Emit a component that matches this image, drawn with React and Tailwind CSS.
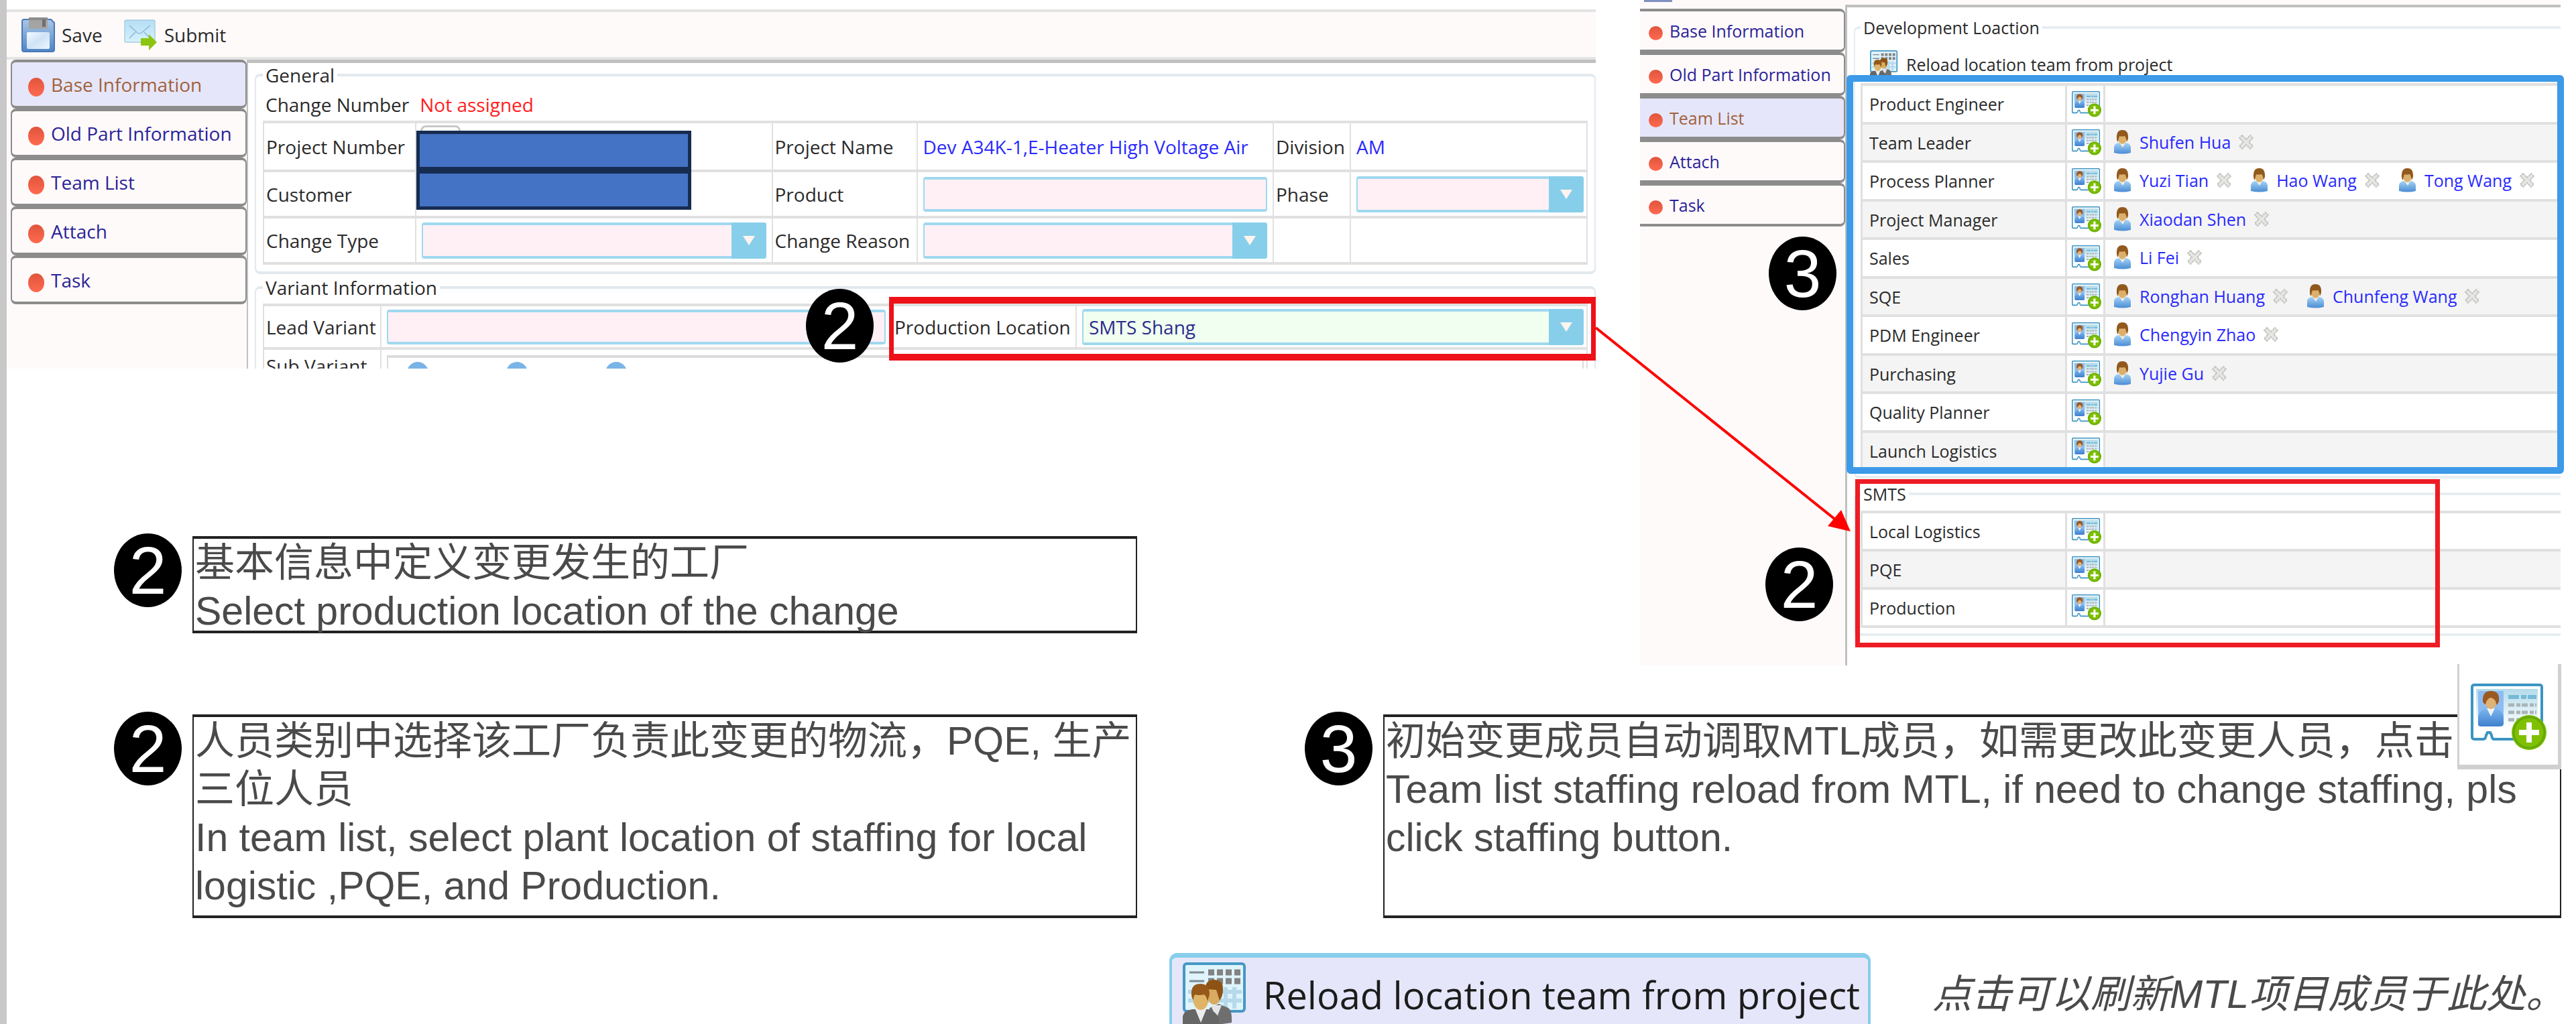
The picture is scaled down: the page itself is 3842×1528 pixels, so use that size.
import { useId } from "react";

function FloppyIcon() {
  return (
    <svg viewBox="0 0 50 52" className="h-[52px] w-[50px]" aria-hidden="true">
      <defs>
        <linearGradient id="floppyBody" x1="0" y1="0" x2="0" y2="1">
          <stop offset="0" stopColor="#a9c6e6" />
          <stop offset="1" stopColor="#4f86c6" />
        </linearGradient>
        <linearGradient id="floppyLabel" x1="0" y1="0" x2="1" y2="1">
          <stop offset="0" stopColor="#f4faff" />
          <stop offset="0.5" stopColor="#cfe3f6" />
          <stop offset="1" stopColor="#eef6ff" />
        </linearGradient>
      </defs>
      <path d="M4 3h40l5 5v40a3 3 0 0 1-3 3H4a3 3 0 0 1-3-3V6a3 3 0 0 1 3-3z" fill="url(#floppyBody)" stroke="#4c78b4" strokeWidth="2" />
      <path d="M11 0h28v15a2 2 0 0 1-2 2H13a2 2 0 0 1-2-2z" fill="#a4a4a4" />
      <path d="M11 0h28v4H11z" fill="#8c8c8c" />
      <rect x="31" y="3" width="5" height="11" fill="#6e6e6e" />
      <rect x="8" y="22" width="34" height="25" rx="2" fill="url(#floppyLabel)" />
    </svg>
  );
}

function MailIcon() {
  return (
    <svg viewBox="0 0 50 46" className="h-[46px] w-[50px]" aria-hidden="true">
      <defs>
        <linearGradient id="mailBody" x1="0" y1="0" x2="0" y2="1">
          <stop offset="0" stopColor="#b5def5" />
          <stop offset="1" stopColor="#d6f1fd" />
        </linearGradient>
      </defs>
      <rect x="1" y="1" width="45" height="33" rx="2" fill="url(#mailBody)" stroke="#a9cde0" strokeWidth="1.5" />
      <path d="M8 9l12 11q3 2 6 0L39 9M8 28l9-9M39 28l-9-9" fill="none" stroke="#8db9d2" strokeWidth="1.5" />
      <path d="M25 28h12v-6l12 12-12 12v-7H25z" fill="#8cc510" />
    </svg>
  );
}

function CardIcon({ className }) {
  const id = useId();
  return (
    <svg viewBox="0 0 113 100" className={className} aria-hidden="true">
      <defs>
        <linearGradient id={id + "c"} x1="0" y1="0" x2="0" y2="1">
          <stop offset="0" stopColor="#b4dbea" />
          <stop offset="0.9" stopColor="#ffffff" />
        </linearGradient>
        <linearGradient id={id + "s"} x1="0" y1="0" x2="0" y2="1">
          <stop offset="0" stopColor="#7db7f0" />
          <stop offset="1" stopColor="#3f7fcd" />
        </linearGradient>
      </defs>
      <path d="M5 2h98a3 3 0 0 1 3 3v74a4 4 0 0 1-4 4H34q-2 0-3-6l-2-4h-4l-2 4q-1 6-4 6H5a3 3 0 0 1-3-3V5a3 3 0 0 1 3-3z" fill="#fff" stroke="#3b94c2" strokeWidth="4" />
      <rect x="8" y="8" width="92" height="62" fill={`url(#${id}c)`} />
      <rect x="11" y="11" width="38" height="40" fill="#8cbcf2" />
      <path d="M11 62V50q2-11 12-13h14q10 2 12 13v10q0 4-6 4H17q-5 0-6-2z" fill={`url(#${id}s)`} />
      <path d="M24 37h12l-6 12z" fill="#f2f4f6" />
      <ellipse cx="30" cy="25" rx="9" ry="13" fill="#dfb276" />
      <path d="M18 27q-1-16 12-16 14 0 12 16-2 4-4 5 0-9-8-11-6 1-8 10-3-1-4-4z" fill="#9a5a22" />
      <path d="M56 20h42" stroke="#76bad8" strokeWidth="6" strokeDasharray="16 3 8 2" />
      <path d="M56 32h42M56 43h42M56 54h20" stroke="#a9b4b9" strokeWidth="5" strokeDasharray="9 3 6 2" />
      <circle cx="87" cy="73" r="26" fill="#7fc000" />
      <circle cx="87" cy="73" r="23" fill="none" stroke="#64a80a" strokeWidth="3" />
      <path d="M87 58v30M72 73h30" stroke="#fff" strokeWidth="8" />
    </svg>
  );
}

function GroupIcon({ className }) {
  return (
    <svg viewBox="0 0 96 96" className={className} aria-hidden="true">
      <rect x="2" y="2" width="90" height="71" rx="4" fill="#dff4fb" stroke="#4598c4" strokeWidth="4" />
      <path d="M8 44h80M8 57h80M64 37v32M77 37v32" stroke="#b6d9ec" strokeWidth="6" />
      <path d="M10 15h22M10 28h22" stroke="#7d8a90" strokeWidth="3" />
      <path d="M38 15h48M38 28h48" stroke="#828282" strokeWidth="9" strokeDasharray="9 4" />
      <path d="M34 96l6-28 14-6 14 6q6 4 5 22l-14 2z" fill="#6f6f6f" />
      <path d="M42 64l8 20 8-20z" fill="#e4e4e6" />
      <ellipse cx="47" cy="45" rx="11" ry="18" fill="#d8aa62" />
      <path d="M34 40q-1-13 12-14 15 0 14 15 0 9-5 16l-5-16z" fill="#8e5214" />
      <path d="M0 96V80q2-8 14-10h24q12 3 16 14v12z" fill="#666" />
      <path d="M18 68l9 22 9-22z" fill="#ececef" />
      <ellipse cx="27" cy="53" rx="12" ry="18" fill="#e0b468" />
      <path d="M13 48q-1-16 13-16 14 0 14 16l-3 10q-2-8-5-10-9 2-14 0-2 4-2 8-3-3-3-8z" fill="#96591a" />
    </svg>
  );
}

function UserIcon() {
  const id = useId();
  return (
    <svg viewBox="0 0 27 36" className="h-9 w-[27px] shrink-0" aria-hidden="true">
      <defs>
        <linearGradient id={id} x1="0" y1="0" x2="0" y2="1">
          <stop offset="0" stopColor="#a6d4f7" />
          <stop offset="1" stopColor="#4a8cd4" />
        </linearGradient>
      </defs>
      <path d="M1 34v-9q1-5 7-6h11q6 1 7 6v9q-12 3-25 0z" fill={`url(#${id})`} />
      <path d="M9 19h9l-4 7z" fill="#f3efe6" />
      <ellipse cx="13.5" cy="12" rx="6.5" ry="9" fill="#dcb06a" />
      <path d="M5 13Q4 0 13.5 0 23 0 22 13l-2 5q-1-7-3-9-7 1-8 0-1 3-2 9-2-2-2-5z" fill="#92591f" />
    </svg>
  );
}

function RemoveIcon() {
  return (
    <svg viewBox="0 0 22 22" className="h-[22px] w-[22px]" aria-hidden="true">
      <path d="M5 1l6 6 6-6 4 4-6 6 6 6-4 4-6-6-6 6-4-4 6-6-6-6z" fill="#e6e6e4" stroke="#c2c4be" strokeWidth="2" strokeDasharray="3 1" />
    </svg>
  );
}

function Step({ n, className }) {
  return (
    <span className={"absolute z-20 flex h-[110px] w-[101px] items-center justify-center rounded-[50%] bg-black font-['Liberation_Sans',sans-serif] text-[100px] leading-none text-white " + className}>
      {n}
    </span>
  );
}

const TABS = ["Base Information", "Old Part Information", "Team List", "Attach", "Task"];

function SideTabs({ active, tab, dot, className }) {
  return (
    <nav className={"flex flex-col " + className}>
      {TABS.map((t) => (
        <button
          key={t}
          type="button"
          className={"flex items-center whitespace-nowrap rounded-lg border-x-2 border-y-4 border-[#8c8c8c] " + tab + (t === active ? " bg-[#e6e6fa] text-[#a0623c]" : " bg-[#fffafa] text-[#2b2398]")}
        >
          <span className={"shrink-0 rounded-[50%] bg-linear-to-b from-[#e0553c] to-[#ff6a50] " + dot} />
          {t}
        </button>
      ))}
    </nav>
  );
}

function Dropdown({ id, value = "", green }) {
  return (
    <div className="relative">
      <select
        id={id}
        defaultValue={value}
        className={"block h-[54px] w-full appearance-none rounded-sm border-x-2 border-y-4 border-[#a0d8f0] pl-2 text-[28px] leading-9 text-[#2b2b8c] " + (green ? "bg-[#f0fff0]" : "bg-[#fff0f5]")}
      >
        <option value={value}>{value}</option>
      </select>
      <span className="pointer-events-none absolute inset-y-0 right-0 flex w-[52px] items-center justify-center rounded-r-sm bg-[#87ceeb]">
        <svg viewBox="0 0 18 14" className="h-3.5 w-[18px]" aria-hidden="true">
          <path d="M0 0h18L9 14z" fill="#fff4ee" />
        </svg>
      </span>
    </div>
  );
}

const inputClass = "block h-[52px] w-full rounded-sm border-x-2 border-y-4 border-[#a0d8f0] bg-[#fff0f5] px-2";
const th = "border-x-2 border-y-4 border-[#e0e0e0] p-0 pl-[3px] text-left font-normal whitespace-nowrap";
const td = "border-x-2 border-y-4 border-[#e0e0e0] px-2 py-0";

function MaskedValue() {
  return <div className="relative z-10 h-[59px] w-[410px] border-[5px] border-[#172c51] bg-[#4472c4]" />;
}

function ChangeForm() {
  return (
    <section className="relative pt-3.5 text-[28px] leading-9 text-[#2a2a2a]">
      <div className="flex h-[75px] items-center border-y-4 border-[#e4e4e4] bg-[#fffafa] pl-[22px]">
        <button type="button" className="flex items-center gap-2.5">
          <FloppyIcon />
          Save
        </button>
        <button type="button" className="ml-8 flex items-center gap-2.5">
          <MailIcon />
          Submit
        </button>
      </div>
      <div className="flex h-[461px] overflow-hidden">
        <SideTabs active="Base Information" className="w-[358px] shrink-0 bg-[#fffafa] pl-1.5" tab="h-[73px] pl-6 gap-2.5" dot="mt-2 h-7 w-6" />
        <div className="min-w-0 grow border-l-2 border-t-[5px] border-[#c0c0c0] pl-2.5">
          <fieldset className="min-w-0 rounded-lg border-x-2 border-y-4 border-[#e1e9ef] pr-2.5 pb-2.5 pl-2.5">
            <legend className="px-1">General</legend>
            <p className="mt-2 flex gap-4 pl-1">
              Change Number <span className="text-[#ff2020]">Not assigned</span>
            </p>
            <table className="mt-1.5 w-full table-fixed border-collapse">
              <colgroup>
                <col className="w-[227px]" />
                <col />
                <col className="w-[216px]" />
                <col />
                <col className="w-[115px]" />
                <col className="w-[353px]" />
              </colgroup>
              <tbody>
                <tr className="h-[73px]">
                  <th className={th} scope="row">Project Number</th>
                  <td className="border-x-2 border-y-4 border-[#e0e0e0] p-0">
                    <div className="relative h-[59px]">
                      <span className="absolute -top-0.5 left-1.5 h-8 w-[60px] rounded-lg border-[3px] border-[#c8c8c8] bg-white" />
                      <div className="absolute top-1.5">
                        <MaskedValue />
                      </div>
                    </div>
                  </td>
                  <th className={th} scope="row">Project Name</th>
                  <td className={td + " whitespace-nowrap text-[#2a2aff]"}>Dev A34K-1,E-Heater High Voltage Air</td>
                  <th className={th} scope="row">Division</th>
                  <td className={td + " text-[#2a2aff]"}>AM</td>
                </tr>
                <tr className="h-[69px]">
                  <th className={th} scope="row">Customer</th>
                  <td className="border-x-2 border-y-4 border-[#e0e0e0] p-0">
                    <div className="relative h-[59px]">
                      <div className="absolute -top-1.5">
                        <MaskedValue />
                      </div>
                    </div>
                  </td>
                  <th className={th} scope="row"><label htmlFor="product">Product</label></th>
                  <td className={td}><input id="product" type="text" className={inputClass} /></td>
                  <th className={th} scope="row"><label htmlFor="phase">Phase</label></th>
                  <td className="border-x-2 border-y-4 border-[#e0e0e0] py-0 pr-1 pl-2"><Dropdown id="phase" /></td>
                </tr>
                <tr className="h-[69px]">
                  <th className={th} scope="row"><label htmlFor="ctype">Change Type</label></th>
                  <td className={td}><Dropdown id="ctype" /></td>
                  <th className={th} scope="row"><label htmlFor="creason">Change Reason</label></th>
                  <td className={td}><Dropdown id="creason" /></td>
                  <td className={td} />
                  <td className={td} />
                </tr>
              </tbody>
            </table>
          </fieldset>
          <fieldset className="relative mt-0.5 min-w-0 rounded-t-lg border-x-2 border-t-4 border-[#e1e9ef] pr-2.5 pl-2.5">
            <legend className="px-1">Variant Information</legend>
            <table className="mt-1.5 w-full table-fixed border-collapse">
              <colgroup>
                <col className="w-[175px]" />
                <col />
                <col className="w-[275px]" />
                <col />
              </colgroup>
              <tbody>
                <tr className="h-[65px]">
                  <th className={th} scope="row"><label htmlFor="lead">Lead Variant</label></th>
                  <td className={td}><input id="lead" type="text" className={inputClass} /></td>
                  <th className={th} scope="row"><label htmlFor="loc">Production Location</label></th>
                  <td className="border-x-2 border-y-4 border-[#e0e0e0] py-0 pr-1 pl-2"><Dropdown id="loc" value="SMTS Shang" green /></td>
                </tr>
                <tr className="h-[65px]">
                  <th className={th + " align-top"} scope="row"><div className="pt-1.5">Sub Variant</div></th>
                  <td colSpan={3} className="border-x-2 border-y-4 border-[#e0e0e0] py-2 pr-1 pl-2 align-top">
                    <div className="flex h-10 gap-[116px] border-2 border-t-4 border-[#dcdcdc] pt-1.5 pl-7">
                      <span className="h-8 w-8 rounded-full bg-[#7ab4e6]" />
                      <span className="h-8 w-8 rounded-full bg-[#7ab4e6]" />
                      <span className="h-8 w-8 rounded-full bg-[#7ab4e6]" />
                    </div>
                  </td>
                </tr>
              </tbody>
            </table>
          </fieldset>
        </div>
      </div>
      <div className="pointer-events-none absolute right-0 bottom-3 h-[95px] w-[1054px] border-x-[7px] border-y-[10px] border-[#ee1118]">
        <Step n="2" className="-top-[22px] -left-[131px]" />
      </div>
    </section>
  );
}

const TEAM = [
  ["Product Engineer", []],
  ["Team Leader", ["Shufen Hua"]],
  ["Process Planner", ["Yuzi Tian", "Hao Wang", "Tong Wang"]],
  ["Project Manager", ["Xiaodan Shen"]],
  ["Sales", ["Li Fei"]],
  ["SQE", ["Ronghan Huang", "Chunfeng Wang"]],
  ["PDM Engineer", ["Chengyin Zhao"]],
  ["Purchasing", ["Yujie Gu"]],
  ["Quality Planner", []],
  ["Launch Logistics", []],
];

const SMTS = [
  ["Local Logistics", []],
  ["PQE", []],
  ["Production", []],
];

const cell = "border-y-4 border-l-[3px] border-[#e0e0e0] py-0 font-normal";

function TeamTable({ rows, odd }) {
  return (
    <table className="w-full table-fixed border-collapse">
      <colgroup>
        <col className="w-[305px]" />
        <col className="w-[57px]" />
        <col />
      </colgroup>
      <tbody>
        {rows.map(([role, people], i) => (
          <tr key={role} className={i % 2 ? "h-[57px] bg-[#f4f4f4]" : odd + " bg-white"}>
            <th scope="row" className={cell + " pl-2.5 text-left whitespace-nowrap"}>{role}</th>
            <td className={cell + " bg-white pl-[7px]"}>
              <button type="button" aria-label={"Add " + role} className="block">
                <CardIcon className="h-[39px] w-[44px]" />
              </button>
            </td>
            <td className={cell + " pl-3"}>
              <div className="flex items-center gap-7 pb-0.5">
                {people.map((p) => (
                  <span key={p} className="flex items-center gap-3 whitespace-nowrap text-[#2a2aff]">
                    <UserIcon />
                    <a href="#member">{p}</a>
                    <button type="button" aria-label={"Remove " + p}><RemoveIcon /></button>
                  </span>
                ))}
              </div>
            </td>
          </tr>
        ))}
      </tbody>
    </table>
  );
}

function TeamPanel() {
  return (
    <section className="relative text-[25px] leading-[30px] text-[#2a2a2a]">
      <div className="flex h-[7px] bg-[#fffafa] pl-1.5">
        <span className="h-[3px] w-[42px] bg-[#8090c0]" />
      </div>
      <div className="flex h-[986px]">
        <SideTabs active="Team List" className="w-[306px] shrink-0 bg-[#fffafa] pt-1.5" tab="h-[65px] pl-[13px] gap-2.5 rounded-l-none border-l-0" dot="mt-2 size-[21px]" />
        <div className="min-w-0 grow border-t-4 border-l-[3px] border-[#c0c0c0] pt-[15px] pl-2.5">
          <fieldset className="min-w-0 rounded-l-lg border-y-4 border-l-2 border-[#e6eef2] pb-[7px] pl-2">
            <legend className="px-1">Development Loaction</legend>
            <button type="button" className="mt-5 ml-3.5 flex h-10 items-center gap-3">
              <GroupIcon className="size-[42px]" />
              Reload location team from project
            </button>
            <div className="relative mt-2">
              <TeamTable rows={TEAM} odd="h-[58px]" />
              <div className="pointer-events-none absolute -top-3 -right-[5px] -bottom-1 -left-[21px] rounded-md border-[10px] border-[#3c9ae8]" />
            </div>
          </fieldset>
          <fieldset className="mt-2 min-w-0 rounded-l-lg border-y-4 border-l-2 border-[#e6eef2] pb-2 pl-2">
            <legend className="px-1">SMTS</legend>
            <div className="relative mt-2.5">
              <TeamTable rows={SMTS} odd="h-[57px]" />
              <div className="pointer-events-none absolute -top-[47px] right-[180px] -bottom-[29px] -left-2 border-[7px] border-[#ee1c24]" />
            </div>
          </fieldset>
        </div>
      </div>
      <Step n="3" className="top-[353px] left-[192px]" />
      <Step n="2" className="top-[817px] left-[187px]" />
      <svg viewBox="0 0 380 310" className="pointer-events-none absolute top-[487px] -left-[66px] z-10 h-[310px] w-[380px]" aria-hidden="true">
        <path d="M0 2L362 292" stroke="#ff0000" strokeWidth="4" />
        <path d="M380 306L346 298 366 274z" fill="#ff0000" />
      </svg>
    </section>
  );
}

function Note({ n, className, children }) {
  return (
    <div className={"relative min-w-0 border-x-2 border-y-4 border-[#222] pl-0.5 whitespace-nowrap text-[#4a4a4a] " + className}>
      <Step n={n} className="-top-2 -left-[119px]" />
      {children}
    </div>
  );
}

export default function App() {
  return (
    <main className="h-screen overflow-hidden border-l-[10px] border-[#c8c8c8] bg-white font-['Open_Sans','Noto_Sans',sans-serif]">
      <div className="grid grid-cols-[2370fr_1373fr] gap-x-[66px] pr-[23px]">
        <div>
          <ChangeForm />
          <div className="mt-[250px] mr-[684px] ml-[277px] font-['Liberation_Sans','Noto_Sans_CJK_SC',sans-serif] text-[59px] leading-[72px]">
            <Note n="2" className="h-[145px]">
              <p>基本信息中定义变更发生的工厂</p>
              <p>Select production location of the change</p>
            </Note>
          </div>
        </div>
        <TeamPanel />
      </div>
      <div className="mt-[73px] grid grid-cols-[1409fr_1757fr] gap-x-[367px] pr-[22px] pl-[277px] font-['Liberation_Sans','Noto_Sans_CJK_SC',sans-serif] text-[59px] leading-[72px]">
        <Note n="2" className="h-[304px]">
          <p>人员类别中选择该工厂负责此变更的物流，PQE, 生产<br />三位人员</p>
          <p>In team list, select plant location of staffing for local<br />logistic ,PQE, and Production.</p>
        </Note>
        <Note n="3" className="h-[304px]">
          <p>初始变更成员自动调取MTL成员，如需更改此变更人员，点击</p>
          <p>Team list staffing reload from MTL, if need to change staffing, pls<br />click staffing button.</p>
          <button type="button" aria-label="Staffing" className="absolute -top-[79px] -right-0.5 flex h-[157px] w-[155px] justify-center border-r-[5px] border-b-[7px] border-l-[3px] border-[#d0d0d0] bg-white pt-[29px]">
            <CardIcon className="h-[100px] w-[113px]" />
          </button>
        </Note>
      </div>
      <div className="mt-[52px] flex items-center justify-end gap-[92px] pr-4">
        <button type="button" className="flex h-[124px] items-center gap-6 rounded-xl border-x-4 border-y-[7px] border-[#87ceeb] bg-[#e6e6fa] pr-3 pl-4 text-[56px] leading-[72px] whitespace-nowrap text-[#1c1c1c]">
          <GroupIcon className="size-[96px]" />
          Reload location team from project
        </button>
        <p className="font-['Liberation_Sans','Noto_Sans_CJK_SC',sans-serif] text-[59px] leading-[72px] whitespace-nowrap text-[#4a4a4a] italic">点击可以刷新MTL项目成员于此处。</p>
      </div>
    </main>
  );
}
